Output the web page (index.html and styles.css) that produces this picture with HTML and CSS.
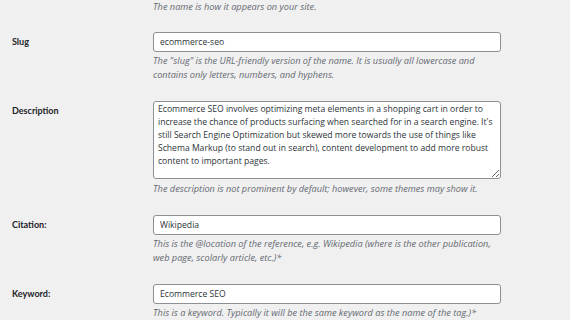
FILE: index.html
```html
<!DOCTYPE html>
<html lang="en">
<head>
<meta charset="utf-8">
<title>Edit Tag</title>
<link rel="stylesheet" href="styles.css">
</head>
<body>
<div class="form">
  <div class="row">
    <div class="label"></div>
    <div class="field"><p class="desc">The name is how it appears on your site.</p></div>
  </div>
  <div class="row">
    <label class="label" for="slug">Slug</label>
    <div class="field">
      <input class="text" id="slug" type="text" value="ecommerce-seo">
      <p class="desc">The "slug" is the URL-friendly version of the name. It is usually all lowercase and contains only letters, numbers, and hyphens.</p>
    </div>
  </div>
  <div class="row">
    <label class="label" for="description">Description</label>
    <div class="field">
      <textarea class="area" id="description">Ecommerce SEO involves optimizing meta elements in a shopping cart in order to increase the chance of products surfacing when searched for in a search engine. It's still Search Engine Optimization but skewed more towards the use of things like Schema Markup (to stand out in search), content development to add more robust content to important pages.</textarea>
      <p class="desc desc-note">The description is not prominent by default; however, some themes may show it.</p>
    </div>
  </div>
  <div class="row">
    <label class="label" for="citation">Citation:</label>
    <div class="field">
      <input class="text" id="citation" type="text" value="Wikipedia">
      <p class="desc">This is the @location of the reference, e.g. Wikipedia (where is the other publication, web page, scolarly article, etc.)*</p>
    </div>
  </div>
  <div class="row">
    <label class="label" for="keyword">Keyword:</label>
    <div class="field">
      <input class="text" id="keyword" type="text" value="Ecommerce SEO">
      <p class="desc">This is a keyword. Typically it will be the same keyword as the name of the tag.)*</p>
    </div>
  </div>
</div>
</body>
</html>
```

FILE: styles.css
```css
html, body {
  margin: 0;
  padding: 0;
  background: #f0f0f1;
}

body {
  font-family: "Open Sans", "Noto Sans", sans-serif;
  color: #1d2327;
  font-size: 9px;
}

.form {
  display: flex;
  flex-direction: column;
  gap: 19px;
  padding-left: 12px;
}

.row {
  display: grid;
  grid-template-columns: 141px 348px;
  align-items: start;
}

.label {
  font-family: Lato, "Open Sans", sans-serif;
  font-weight: 700;
  font-size: 9px;
  line-height: 19px;
  color: #1d2327;
}

.field {
  display: flex;
  flex-direction: column;
}

.desc {
  margin: 0;
  font-style: italic;
  color: #646970;
  font-size: 9.2px;
  line-height: 14px;
}

.row:first-child .desc {
  line-height: 13px;
}

.text {
  box-sizing: border-box;
  width: 348px;
  height: 20px;
  margin: 0 0 2px;
  padding: 0 6px;
  border: 1px solid #8c8f94;
  border-radius: 3px;
  background: #fff;
  color: #2c3338;
  font-family: inherit;
  font-size: 8.6px;
}

.area {
  box-sizing: border-box;
  display: block;
  width: 348px;
  height: 78px;
  margin: 0 0 3px;
  padding: 1px 4px;
  border: 1px solid #8c8f94;
  border-radius: 3px;
  background: #fff;
  color: #2c3338;
  font-family: inherit;
  font-size: 8.6px;
  line-height: 13px;
  resize: vertical;
  overflow: hidden;
}
```
